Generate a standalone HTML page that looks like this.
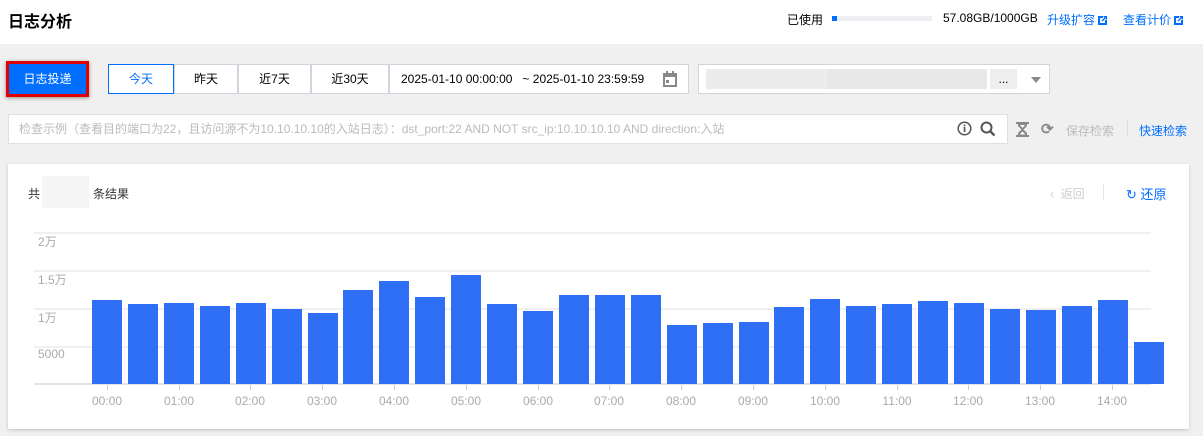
<html><head><style>
*{margin:0;padding:0;box-sizing:border-box}
body{width:1203px;height:436px;background:#f0f0f0;font-family:"Liberation Sans","Noto Sans CJK SC",sans-serif;font-size:12px;color:#000;position:relative;overflow:hidden}
.a{position:absolute}
.hdr{left:0;top:0;width:1203px;height:44px;background:#fff}
.btn{top:64px;height:30px;border:1px solid #d0d4dc;background:#fff;line-height:28px;text-align:center;font-size:12px}
.bar{position:absolute;width:30px;background:#2f6ff5;bottom:52px}
.g{position:absolute;left:34px;width:1117px;height:2px;background:#f0f0f0}
.yl{position:absolute;left:38px;color:#aaa;font-size:12px}
.xl{position:absolute;top:394px;color:#aaa;font-size:12px;width:40px;text-align:center}
.tk{position:absolute;top:385px;width:1px;height:5px;background:#ccc}
</style></head><body>
<div class="a hdr"></div>
<div class="a" style="left:8px;top:8px;font-size:16px;font-weight:bold">日志分析</div>
<div class="a" style="left:787px;top:11px">已使用</div>
<div class="a" style="left:832px;top:16px;width:100px;height:5px;background:#eef0f4"><div style="width:5px;height:5px;background:#006eff"></div></div>
<div class="a" style="left:943px;top:11px">57.08GB/1000GB</div>
<div class="a" style="left:1047px;top:11px;color:#006eff">升级扩容 <svg width="9" height="9" viewBox="0 0 9 9" style="vertical-align:-1px"><path d="M0 0h5v2H2v5h5V4h2v5H0z M5 0h4v4L7.5 2.5 4.5 5.5 3.5 4.5 6.5 1.5z" fill="#006eff"/></svg></div>
<div class="a" style="left:1123px;top:11px;color:#006eff">查看计价 <svg width="9" height="9" viewBox="0 0 9 9" style="vertical-align:-1px"><path d="M0 0h5v2H2v5h5V4h2v5H0z M5 0h4v4L7.5 2.5 4.5 5.5 3.5 4.5 6.5 1.5z" fill="#006eff"/></svg></div>

<div class="a" style="left:6px;top:61px;width:83px;height:36px;border:3px solid #e30000;background:#006eff;color:#fff;text-align:center;line-height:30px;box-shadow:0 1px 4px rgba(0,0,0,.4)">日志投递</div>
<div class="a btn" style="left:108px;width:66px;border-color:#006eff;color:#006eff">今天</div>
<div class="a btn" style="left:174px;width:64px">昨天</div>
<div class="a btn" style="left:238px;width:73px">近7天</div>
<div class="a btn" style="left:311px;width:78px">近30天</div>
<div class="a btn" style="left:389px;width:300px;text-align:left;padding-left:11px">2025-01-10 00:00:00 &nbsp;&nbsp;~ 2025-01-10 23:59:59</div>
<svg class="a" style="left:663px;top:71px" width="14" height="16" viewBox="0 0 14 16"><rect x="0" y="2" width="14" height="14" fill="#888"/><rect x="2" y="6" width="10" height="8" fill="#fff"/><rect x="3" y="0" width="2" height="4" fill="#888"/><rect x="9" y="0" width="2" height="4" fill="#888"/><rect x="3" y="9" width="3" height="3" fill="#888"/></svg>
<div class="a btn" style="left:698px;width:352px"></div>
<div class="a" style="left:706px;top:69px;width:127px;height:20px;background:#ececec"></div>
<div class="a" style="left:827px;top:69px;width:160px;height:20px;background:#e8e8e8"></div>
<div class="a" style="left:990px;top:69px;width:27px;height:20px;background:#eee;text-align:center;line-height:20px">...</div>
<div class="a" style="left:1031px;top:77px;border:5px solid transparent;border-top:6px solid #888"></div>

<div class="a" style="left:8px;top:114px;width:1000px;height:30px;background:#fff;border:1px solid #dcdfe6;color:#bbb;line-height:28px;padding-left:10px">检查示例（查看目的端口为22，且访问源不为10.10.10.10的入站日志）：dst_port:22 AND NOT src_ip:10.10.10.10 AND direction:入站</div>
<svg class="a" style="left:957px;top:121px" width="15" height="15" viewBox="0 0 15 15"><circle cx="7.5" cy="7.5" r="6.3" fill="none" stroke="#555" stroke-width="1.5"/><rect x="6.7" y="6" width="1.7" height="5" fill="#555"/><rect x="6.7" y="3.5" width="1.7" height="1.7" fill="#555"/></svg>
<svg class="a" style="left:980px;top:121px" width="16" height="16" viewBox="0 0 16 16"><circle cx="6.5" cy="6.5" r="5" fill="none" stroke="#555" stroke-width="2"/><path d="M10 10l4.5 4.5" stroke="#555" stroke-width="2.4"/></svg>
<svg class="a" style="left:1016px;top:122px" width="13" height="15" viewBox="0 0 13 15"><path d="M0 0h13v2h-2v2L7.5 7.5 11 11v2h2v2H0v-2h2v-2l3.5-3.5L2 4V2H0z" fill="#888"/><path d="M4 3h5L6.5 6z M3.5 12.5l3-3 3 3z" fill="#fff"/></svg>
<div class="a" style="left:1041px;top:120px;font-size:15px;color:#888;font-weight:bold">⟳</div>
<div class="a" style="left:1066px;top:122px;color:#bbb">保存检索</div>
<div class="a" style="left:1127px;top:120px;width:1px;height:16px;background:#ddd"></div>
<div class="a" style="left:1139px;top:122px;color:#006eff">快速检索</div>

<div class="a" style="left:8px;top:164px;width:1181px;height:265px;background:#fff;box-shadow:0 1px 3px rgba(0,0,0,.2)"></div>
<div class="a" style="left:28px;top:185px;color:#333">共</div>
<div class="a" style="left:42px;top:176px;width:47px;height:32px;background:#f5f5f5"></div>
<div class="a" style="left:93px;top:185px;color:#333">条结果</div>
<div class="a" style="left:1050px;top:185px;color:#ccc">‹ &nbsp;返回</div>
<div class="a" style="left:1103px;top:184px;width:1px;height:16px;background:#e5e5e5"></div>
<div class="a" style="left:1126px;top:184px;color:#006eff;font-size:13px">↻ 还原</div>

<div class="g" style="top:232px"></div><div class="g" style="top:270px"></div><div class="g" style="top:308px"></div><div class="g" style="top:346px"></div>
<div class="g" style="top:383px;background:#e3e3e3"></div>
<div class="yl" style="top:233px">2万</div><div class="yl" style="top:271px">1.5万</div><div class="yl" style="top:309px">1万</div><div class="yl" style="top:347px">5000</div>

<div class="bar" style="left:92px;top:300px"></div>
<div class="bar" style="left:128px;top:304px"></div>
<div class="bar" style="left:164px;top:303px"></div>
<div class="bar" style="left:200px;top:306px"></div>
<div class="bar" style="left:236px;top:303px"></div>
<div class="bar" style="left:272px;top:309px"></div>
<div class="bar" style="left:308px;top:313px"></div>
<div class="bar" style="left:343px;top:290px"></div>
<div class="bar" style="left:379px;top:281px"></div>
<div class="bar" style="left:415px;top:297px"></div>
<div class="bar" style="left:451px;top:275px"></div>
<div class="bar" style="left:487px;top:304px"></div>
<div class="bar" style="left:523px;top:311px"></div>
<div class="bar" style="left:559px;top:295px"></div>
<div class="bar" style="left:595px;top:295px"></div>
<div class="bar" style="left:631px;top:295px"></div>
<div class="bar" style="left:667px;top:325px"></div>
<div class="bar" style="left:703px;top:323px"></div>
<div class="bar" style="left:739px;top:322px"></div>
<div class="bar" style="left:774px;top:307px"></div>
<div class="bar" style="left:810px;top:299px"></div>
<div class="bar" style="left:846px;top:306px"></div>
<div class="bar" style="left:882px;top:304px"></div>
<div class="bar" style="left:918px;top:301px"></div>
<div class="bar" style="left:954px;top:303px"></div>
<div class="bar" style="left:990px;top:309px"></div>
<div class="bar" style="left:1026px;top:310px"></div>
<div class="bar" style="left:1062px;top:306px"></div>
<div class="bar" style="left:1098px;top:300px"></div>
<div class="bar" style="left:1134px;top:342px"></div>

<div class="tk" style="left:107px"></div><div class="tk" style="left:179px"></div><div class="tk" style="left:250px"></div><div class="tk" style="left:322px"></div><div class="tk" style="left:394px"></div><div class="tk" style="left:466px"></div><div class="tk" style="left:538px"></div><div class="tk" style="left:609px"></div><div class="tk" style="left:681px"></div><div class="tk" style="left:753px"></div><div class="tk" style="left:825px"></div><div class="tk" style="left:897px"></div><div class="tk" style="left:968px"></div><div class="tk" style="left:1040px"></div><div class="tk" style="left:1112px"></div>
<div class="xl" style="left:87px">00:00</div><div class="xl" style="left:159px">01:00</div><div class="xl" style="left:230px">02:00</div><div class="xl" style="left:302px">03:00</div><div class="xl" style="left:374px">04:00</div><div class="xl" style="left:446px">05:00</div><div class="xl" style="left:518px">06:00</div><div class="xl" style="left:589px">07:00</div><div class="xl" style="left:661px">08:00</div><div class="xl" style="left:733px">09:00</div><div class="xl" style="left:805px">10:00</div><div class="xl" style="left:877px">11:00</div><div class="xl" style="left:948px">12:00</div><div class="xl" style="left:1020px">13:00</div><div class="xl" style="left:1092px">14:00</div>
</body></html>
